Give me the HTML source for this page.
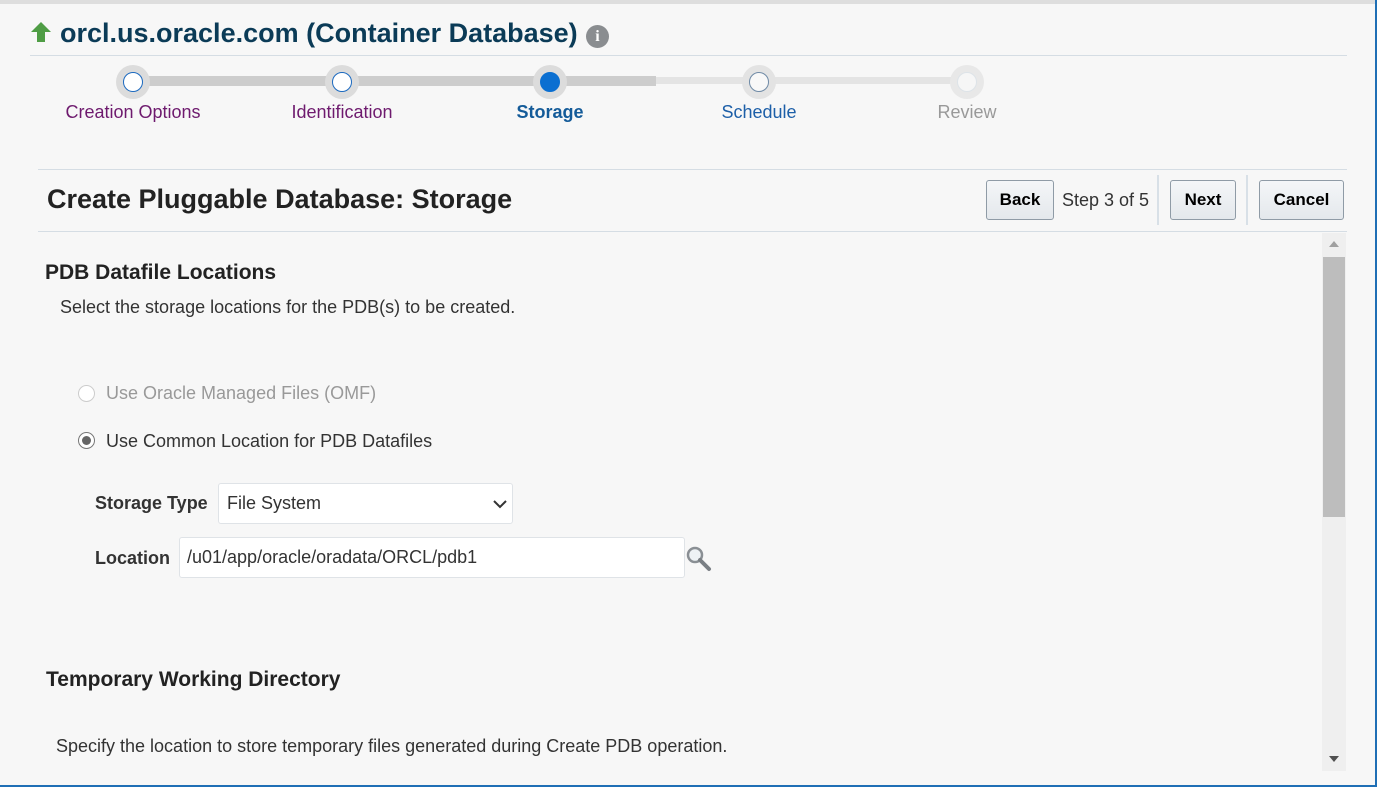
<!DOCTYPE html>
<html><head><style>
body{margin:0;width:1377px;height:787px;overflow:hidden;background:#f7f7f7;font-family:"Liberation Sans",sans-serif;position:relative}
.a{position:absolute}
.t{white-space:nowrap}
.btn{position:absolute;top:180px;height:40px;border:1px solid #8f9ba6;border-radius:3px;background:linear-gradient(#f4f6f8,#e4e8ec);font-weight:bold;font-size:17px;color:#000;text-align:center;line-height:38px;box-sizing:border-box}
.c{position:absolute;top:65px;width:34px;height:34px;border-radius:50%;background:#dcdcdc}
.c i{position:absolute;left:7px;top:7px;width:18px;height:18px;border-radius:50%;border:1px solid;background:#fff}
.lbl{position:absolute;top:102px;font-size:18px;transform:translateX(-50%);white-space:nowrap}
</style></head><body>
<div class="a" style="left:0;top:0;width:1377px;height:4px;background:#dedede"></div>
<div class="a" style="right:0;top:0;width:2px;height:787px;background:#1f6fb5"></div>
<div class="a" style="left:0;bottom:0;width:1377px;height:2px;background:#1f6fb5"></div>
<svg class="a" style="left:30px;top:21px" width="22" height="22" viewBox="0 0 22 22"><path d="M11 1 L21 11 H15 V21 H7 V11 H1 Z" fill="#4f9d45"/></svg>
<div class="a t" style="left:60px;top:18px;font-size:27px;font-weight:bold;color:#0b3b57">orcl.us.oracle.com (Container Database)</div>
<div class="a" style="left:586px;top:25px;width:23px;height:23px;border-radius:50%;background:#8a8d90;color:#fff;font-weight:bold;font-size:16px;text-align:center;line-height:23px;font-family:'Liberation Serif',serif">i</div>
<div class="a" style="left:30px;top:55px;width:1317px;height:1px;background:#d5dde4"></div>
<div class="a" style="left:133px;top:76px;width:523px;height:10px;background:#cdcdcd"></div>
<div class="a" style="left:656px;top:77px;width:311px;height:7px;background:#e4e4e4"></div>
<div class="c" style="left:116px"><i style="border-color:#1c6ac0"></i></div>
<div class="c" style="left:325px"><i style="border-color:#1c6ac0"></i></div>
<div class="c" style="left:533px"><i style="border-color:#0b6fd1;background:#0b6fd1"></i></div>
<div class="c" style="left:742px;background:#e3e3e3"><i style="border-color:#6f8aa6;background:#f8f8f8"></i></div>
<div class="c" style="left:950px;background:#e8e8e8"><i style="border-color:#dde3e8;background:#f6f6f6"></i></div>
<div class="lbl" style="left:133px;color:#6e1a6e">Creation Options</div>
<div class="lbl" style="left:342px;color:#6e1a6e">Identification</div>
<div class="lbl" style="left:550px;color:#145b99;font-weight:bold">Storage</div>
<div class="lbl" style="left:759px;color:#1d5fa8">Schedule</div>
<div class="lbl" style="left:967px;color:#999">Review</div>
<div class="a" style="left:38px;top:169px;width:1309px;height:1px;background:#d5dde4"></div>
<div class="a" style="left:38px;top:231px;width:1309px;height:1px;background:#d5dde4"></div>
<div class="a t" style="left:47px;top:184px;font-size:27px;font-weight:bold;color:#222">Create Pluggable Database: Storage</div>
<div class="btn" style="left:986px;width:68px">Back</div>
<div class="a t" style="left:1062px;top:190px;font-size:18px;color:#333">Step 3 of 5</div>
<div class="a" style="left:1157px;top:175px;width:2px;height:50px;background:#d8e0e7"></div>
<div class="btn" style="left:1170px;width:66px">Next</div>
<div class="a" style="left:1246px;top:175px;width:2px;height:50px;background:#d8e0e7"></div>
<div class="btn" style="left:1259px;width:85px">Cancel</div>
<div class="a" style="left:1322px;top:233px;width:24px;height:538px;background:#efefef"></div>
<div class="a" style="left:1323px;top:257px;width:22px;height:260px;background:#bdbdbd"></div>
<div class="a" style="left:1329px;top:241px;width:0;height:0;border-left:5px solid transparent;border-right:5px solid transparent;border-bottom:6px solid #a0a0a0"></div>
<div class="a" style="left:1329px;top:756px;width:0;height:0;border-left:5px solid transparent;border-right:5px solid transparent;border-top:6px solid #505050"></div>
<div class="a t" style="left:45px;top:261px;font-size:21px;font-weight:bold;color:#222">PDB Datafile Locations</div>
<div class="a t" style="left:60px;top:297px;font-size:18px;color:#333">Select the storage locations for the PDB(s) to be created.</div>
<div class="a" style="left:78px;top:385px;width:15px;height:15px;border-radius:50%;border:1px solid #ccc;background:#fff"></div>
<div class="a t" style="left:106px;top:383px;font-size:18px;color:#999">Use Oracle Managed Files (OMF)</div>
<div class="a" style="left:78px;top:432px;width:15px;height:15px;border-radius:50%;border:1px solid #777;background:#fff"></div>
<div class="a" style="left:82px;top:436px;width:9px;height:9px;border-radius:50%;background:#666"></div>
<div class="a t" style="left:106px;top:431px;font-size:18px;color:#333">Use Common Location for PDB Datafiles</div>
<div class="a t" style="left:95px;top:493px;font-size:18px;font-weight:bold;color:#333">Storage Type</div>
<div class="a" style="left:218px;top:483px;width:295px;height:41px;border:1px solid #dfe3e7;border-radius:3px;background:#fff;box-sizing:border-box"></div>
<div class="a t" style="left:227px;top:493px;font-size:18px;color:#333">File System</div>
<svg class="a" style="left:493px;top:499px" width="14" height="10"><path d="M1 2 L7 8 L13 2" stroke="#333" stroke-width="2" fill="none"/></svg>
<div class="a t" style="left:95px;top:548px;font-size:18px;font-weight:bold;color:#333">Location</div>
<div class="a" style="left:179px;top:537px;width:506px;height:41px;border:1px solid #dfe3e7;border-radius:3px;background:#fff;box-sizing:border-box"></div>
<div class="a t" style="left:187px;top:547px;font-size:18px;color:#333">/u01/app/oracle/oradata/ORCL/pdb1</div>
<svg class="a" style="left:685px;top:545px" width="27" height="27"><circle cx="10" cy="10" r="7" stroke="#8a8f94" stroke-width="2.5" fill="#eef2f5"/><path d="M15 15 L24 24" stroke="#7a7f84" stroke-width="4" stroke-linecap="round"/></svg>
<div class="a t" style="left:46px;top:668px;font-size:21px;font-weight:bold;color:#222">Temporary Working Directory</div>
<div class="a t" style="left:56px;top:736px;font-size:18px;color:#333">Specify the location to store temporary files generated during Create PDB operation.</div>
</body></html>
